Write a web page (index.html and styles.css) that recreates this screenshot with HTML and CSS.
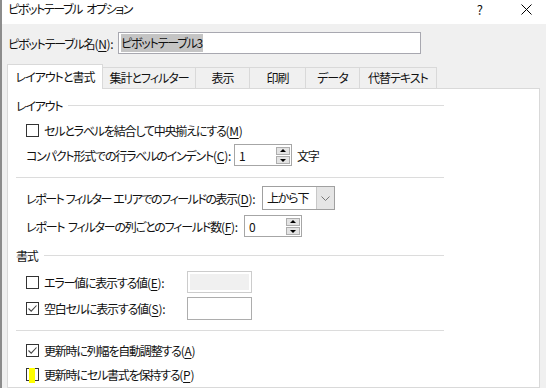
FILE: index.html
```html
<!DOCTYPE html>
<html lang="ja">
<head>
  <meta charset="UTF-8" />
  <title>ピボットテーブル オプション</title>
  <link rel="stylesheet" href="styles.css">
</head>
<body>
<div class="win">
  <div class="titlebar">
    <span class="title">ピボットテーブル オプション</span>
    <span class="help">?</span>
    <svg class="close" width="11" height="11" viewBox="0 0 11 11"><path d="M0.5 0.5L10.5 10.5M10.5 0.5L0.5 10.5" stroke="#000" stroke-width="1"/></svg>
  </div>

  <div class="namerow">
    <label class="namelbl">ピボットテーブル名<span class="k">(<u>N</u>):</span></label>
    <div class="namebox"><span class="sel">ピボットテーブル3</span></div>
  </div>

  <div class="tabs">
    <div class="tab active t1">レイアウトと書式</div>
    <div class="tab t2">集計とフィルター</div>
    <div class="tab t3">表示</div>
    <div class="tab t4">印刷</div>
    <div class="tab t5">データ</div>
    <div class="tab t6">代替テキスト</div>
  </div>

  <div class="panel">
    <div class="sec s1"><span>レイアウト</span><i class="rule"></i></div>

    <div class="row chk r-merge"><span class="box"></span>セルとラベルを結合して中央揃えにする<span class="k">(<u>M</u>)</span></div>

    <div class="row r-indent">
      <span class="lbl l-indent">コンパクト形式での行ラベルのインデント<span class="k">(<u>C</u>):</span></span>
      <div class="spin"><span class="val">1</span><span class="arrows"><b class="up"></b><b class="dn"></b></span></div>
      <span class="unit">文字</span>
    </div>

    <div class="sep sep1"></div>

    <div class="row r-area">
      <span class="lbl l-area">レポート フィルター エリアでのフィールドの表示<span class="k">(<u>D</u>):</span></span>
      <div class="combo"><span class="val">上から下</span><span class="drop"><svg width="9" height="5" viewBox="0 0 9 5"><path d="M0.5 0.5L4.5 4.5L8.5 0.5" stroke="#777" fill="none"/></svg></span></div>
    </div>

    <div class="row r-count">
      <span class="lbl l-count">レポート フィルターの列ごとのフィールド数<span class="k">(<u>F</u>):</span></span>
      <div class="spin"><span class="val">0</span><span class="arrows"><b class="up"></b><b class="dn"></b></span></div>
    </div>

    <div class="sec s2"><span>書式</span><i class="rule"></i></div>

    <div class="row chk r-err">
      <span class="box"></span><span class="lbl l-val">エラー値に表示する値<span class="k">(<u>E</u>):</span></span>
      <div class="txt off"></div>
    </div>

    <div class="row chk r-blank">
      <span class="box on"><svg width="11" height="11" viewBox="0 0 11 11"><path d="M1.5 5.5L4.2 8.2L9.5 2.5" stroke="#444" stroke-width="1.1" fill="none"/></svg></span><span class="lbl l-val">空白セルに表示する値<span class="k">(<u>S</u>):</span></span>
      <div class="txt"></div>
    </div>

    <div class="sep sep2"></div>

    <div class="row chk r-auto"><span class="box on"><svg width="11" height="11" viewBox="0 0 11 11"><path d="M1.5 5.5L4.2 8.2L9.5 2.5" stroke="#444" stroke-width="1.1" fill="none"/></svg></span>更新時に列幅を自動調整する<span class="k">(<u>A</u>)</span></div>

    <div class="row chk r-keep"><span class="box"><i class="mark"></i></span>更新時にセル書式を保持する<span class="k">(<u>P</u>)</span></div>
  </div>
</div>
</body>
</html>
```

FILE: styles.css
```css
html, body { margin: 0; }
body { font-family: "Noto Sans CJK JP", sans-serif; font-size: 12px; font-feature-settings: "palt"; letter-spacing: -1.2px; word-spacing: 2px; color: #111; background: #f0f0f0; width: 546px; height: 388px; overflow: hidden; }
u { text-decoration: underline; text-underline-offset: 2px; }
.k { letter-spacing: -0.3px; }
.win { height: 388px; border-left: 2px solid #8c8c8c; box-sizing: border-box; overflow: hidden; }

.titlebar { height: 24px; background: #fff; display: flex; align-items: flex-start; padding-left: 6px; }
.title { line-height: 18px; letter-spacing: -1.4px; word-spacing: 3px; }
.help { margin-left: auto; line-height: 18px; font-size: 13px; margin-top: 1px; letter-spacing: 0; }
.close { margin: 4px 14px 0 38px; }

.namerow { display: flex; align-items: center; height: 22px; margin-top: 8px; padding-left: 6px; }
.namelbl { width: 110px; white-space: nowrap; }
.namebox { width: 299px; height: 20px; background: #fff; border: 1px solid #a8a8b0; display: flex; align-items: center; padding-left: 2px; }
.sel { background: #c4c4c4; line-height: 18px; padding-right: 1px; }

.tabs { display: flex; align-items: flex-end; height: 24px; margin-top: 10px; padding-left: 5px; }
.tab { height: 20px; line-height: 20px; text-align: center; border: 1px solid #d9d9d9; border-bottom: none; margin-left: -1px; white-space: nowrap; letter-spacing: -1px; }
.tab.active { height: 24px; line-height: 24px; background: #fff; margin-left: 0; position: relative; z-index: 1; margin-bottom: -1px; }
.t1 { width: 94px; }
.t2 { width: 92px; }
.t3 { width: 53px; }
.t4 { width: 55px; }
.t5 { width: 53px; }
.t6 { width: 76px; }

.panel { margin-left: 5px; width: 523px; height: 298px; background: #fff; border: 1px solid #d9d9d9; padding-left: 8px; }

.sec { display: flex; align-items: center; height: 20px; width: 428px; }
.sec .rule { flex: 1; height: 1px; background: #dcdcdc; margin-left: 6px; }
.s1 { margin-top: 6px; }
.s2 { margin-top: 8px; }

.sep { width: 428px; height: 1px; background: #dcdcdc; }
.sep1 { margin-top: 11px; }
.sep2 { margin-top: 10px; }

.row { display: flex; align-items: center; margin-left: 10px; height: 22px; white-space: nowrap; }
.lbl { flex: none; padding-right: 3px; }
.l-indent { min-width: 204px; }
.l-area { min-width: 233px; letter-spacing: -1.45px; word-spacing: 1px; }
.l-count { min-width: 215px; }
.l-val { min-width: 140px; }

.box { flex: none; width: 11px; height: 11px; border: 1px solid #333; margin-right: 5px; position: relative; display: flex; align-items: center; justify-content: center; }
.box .mark { position: absolute; left: 2px; top: -1px; width: 6px; height: 15px; background: #ffff00; }

.r-merge { margin-top: 5px; height: 20px; }
.r-indent { margin-top: 4px; }
.r-area { margin-top: 8px; height: 24px; }
.r-count { margin-top: 5px; }
.r-err { margin-top: 6px; height: 22px; }
.r-blank { margin-top: 4px; height: 23px; }
.r-auto { margin-top: 9px; height: 20px; }
.r-keep { margin-top: 4px; height: 20px; }

.spin { width: 56px; height: 20px; border: 1px solid #a6a6a6; display: flex; align-items: center; background: #fff; }
.spin .val { flex: 1; padding-left: 4px; }
.arrows { display: flex; flex-direction: column; gap: 1px; margin-right: 1px; }
.arrows b { width: 14px; height: 8px; background: #e3e3e3; border: 1px solid #adadad; box-sizing: border-box; position: relative; }
.arrows b::after { content: ""; position: absolute; left: 3px; border-left: 3px solid transparent; border-right: 3px solid transparent; }
.arrows .up::after { top: 1px; border-bottom: 3px solid #000; }
.arrows .dn::after { top: 2px; border-top: 3px solid #000; }
.unit { margin-left: 5px; }

.combo { width: 71px; height: 22px; border: 1px solid #a0a0a0; display: flex; background: #fff; }
.combo .val { flex: 1; padding-left: 4px; line-height: 22px; }
.combo .drop { width: 17px; background: #e5e5e5; border-left: 1px solid #c8c8c8; display: flex; align-items: center; justify-content: center; }

.txt { width: 63px; height: 20px; border: 1px solid #adadad; background: #fff; }
.r-blank .txt { height: 21px; }
.txt.off { background: #f0f0f0; box-shadow: inset 0 0 0 2px #fff; border-color: #cccccc; }
```
